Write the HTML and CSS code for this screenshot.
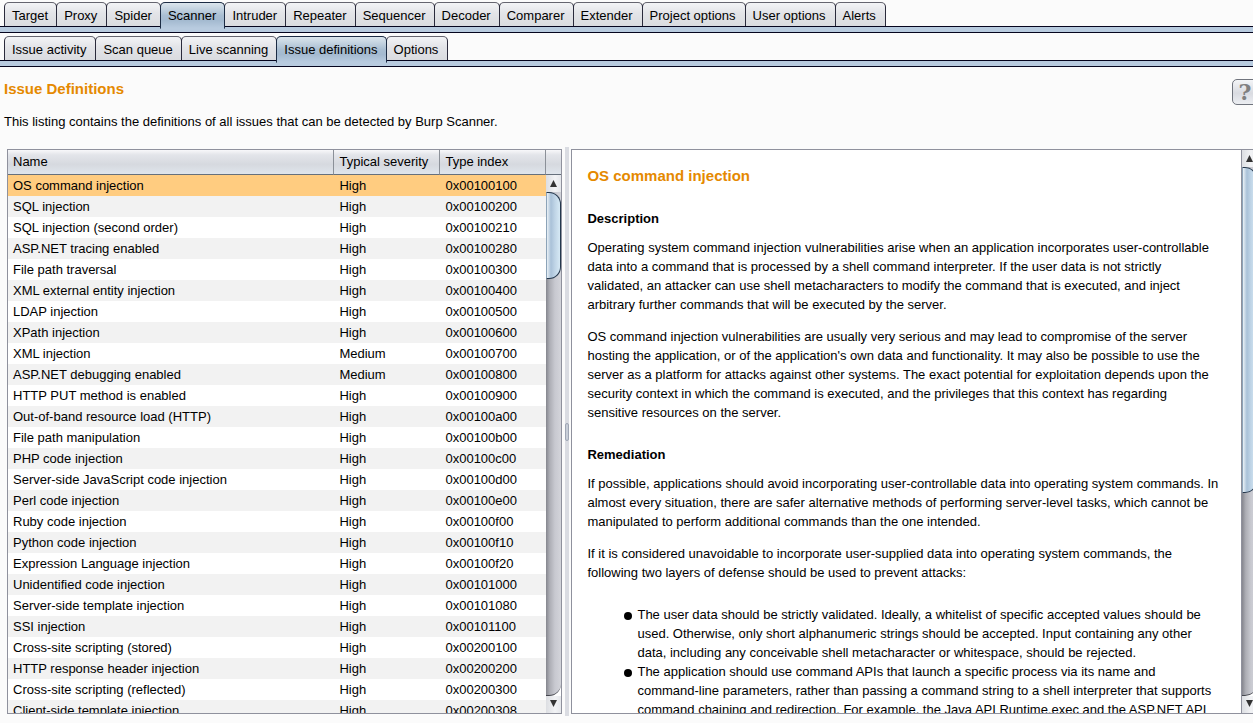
FILE: index.html
```html
<!DOCTYPE html>
<html lang="en">
<head>
<meta charset="utf-8">
<title>Burp Scanner - Issue Definitions</title>
<link rel="stylesheet" href="styles.css">
</head>
<body>
<div class="app">
  <nav class="tabs" aria-label="Tools">
    <button class="tab">Target</button>
    <button class="tab roomy">Proxy</button>
    <button class="tab">Spider</button>
    <button class="tab active">Scanner</button>
    <button class="tab">Intruder</button>
    <button class="tab">Repeater</button>
    <button class="tab">Sequencer</button>
    <button class="tab">Decoder</button>
    <button class="tab">Comparer</button>
    <button class="tab roomy">Extender</button>
    <button class="tab roomy">Project options</button>
    <button class="tab roomy">User options</button>
    <button class="tab roomy">Alerts</button>
  </nav>
  <nav class="tabs" aria-label="Scanner">
    <button class="tab roomy">Issue activity</button>
    <button class="tab">Scan queue</button>
    <button class="tab">Live scanning</button>
    <button class="tab active">Issue definitions</button>
    <button class="tab roomy">Options</button>
  </nav>
  <header class="intro">
    <div class="intro-text">
      <h1 class="title">Issue Definitions</h1>
      <p class="lead">This listing contains the definitions of all issues that can be detected by Burp Scanner.</p>
    </div>
    <button class="help" aria-label="Help">?</button>
  </header>
  <main class="split">
    <section class="list">
      <div class="list-view">
        <table class="issues">
          <colgroup><col><col class="col-severity"><col class="col-index"></colgroup>
          <thead><tr><th>Name</th><th>Typical severity</th><th>Type index</th></tr></thead>
          <tbody>
            <tr class="selected"><td>OS command injection</td><td>High</td><td>0x00100100</td></tr>
            <tr><td>SQL injection</td><td>High</td><td>0x00100200</td></tr>
            <tr><td>SQL injection (second order)</td><td>High</td><td>0x00100210</td></tr>
            <tr><td>ASP.NET tracing enabled</td><td>High</td><td>0x00100280</td></tr>
            <tr><td>File path traversal</td><td>High</td><td>0x00100300</td></tr>
            <tr><td>XML external entity injection</td><td>High</td><td>0x00100400</td></tr>
            <tr><td>LDAP injection</td><td>High</td><td>0x00100500</td></tr>
            <tr><td>XPath injection</td><td>High</td><td>0x00100600</td></tr>
            <tr><td>XML injection</td><td>Medium</td><td>0x00100700</td></tr>
            <tr><td>ASP.NET debugging enabled</td><td>Medium</td><td>0x00100800</td></tr>
            <tr><td>HTTP PUT method is enabled</td><td>High</td><td>0x00100900</td></tr>
            <tr><td>Out-of-band resource load (HTTP)</td><td>High</td><td>0x00100a00</td></tr>
            <tr><td>File path manipulation</td><td>High</td><td>0x00100b00</td></tr>
            <tr><td>PHP code injection</td><td>High</td><td>0x00100c00</td></tr>
            <tr><td>Server-side JavaScript code injection</td><td>High</td><td>0x00100d00</td></tr>
            <tr><td>Perl code injection</td><td>High</td><td>0x00100e00</td></tr>
            <tr><td>Ruby code injection</td><td>High</td><td>0x00100f00</td></tr>
            <tr><td>Python code injection</td><td>High</td><td>0x00100f10</td></tr>
            <tr><td>Expression Language injection</td><td>High</td><td>0x00100f20</td></tr>
            <tr><td>Unidentified code injection</td><td>High</td><td>0x00101000</td></tr>
            <tr><td>Server-side template injection</td><td>High</td><td>0x00101080</td></tr>
            <tr><td>SSI injection</td><td>High</td><td>0x00101100</td></tr>
            <tr><td>Cross-site scripting (stored)</td><td>High</td><td>0x00200100</td></tr>
            <tr><td>HTTP response header injection</td><td>High</td><td>0x00200200</td></tr>
            <tr><td>Cross-site scripting (reflected)</td><td>High</td><td>0x00200300</td></tr>
            <tr><td>Client-side template injection</td><td>High</td><td>0x00200308</td></tr>
          </tbody>
        </table>
      </div>
      <div class="list-side">
        <div class="corner"></div>
        <div class="scrollbar">
          <button class="arrow" aria-label="Scroll up"><svg width="7" height="7" viewBox="0 0 7 7"><path d="M3.5 0L7 7H0z" fill="#333"/></svg></button>
          <div class="track"><div class="thumb thumb-list"></div></div>
          <button class="arrow arrow-down" aria-label="Scroll down"><svg width="7" height="7" viewBox="0 0 7 7"><path d="M0 0H7L3.5 7z" fill="#333"/></svg></button>
        </div>
      </div>
    </section>
    <div class="divider"><span class="grip"></span></div>
    <section class="detail">
      <article class="article">
        <h2 class="title">OS command injection</h2>
        <h3>Description</h3>
        <p>Operating system command injection vulnerabilities arise when an application incorporates user-controllable data into a command that is processed by a shell command interpreter. If the user data is not strictly validated, an attacker can use shell metacharacters to modify the command that is executed, and inject arbitrary further commands that will be executed by the server.</p>
        <p>OS command injection vulnerabilities are usually very serious and may lead to compromise of the server hosting the application, or of the application's own data and functionality. It may also be possible to use the server as a platform for attacks against other systems. The exact potential for exploitation depends upon the security context in which the command is executed, and the privileges that this context has regarding sensitive resources on the server.</p>
        <h3>Remediation</h3>
        <p>If possible, applications should avoid incorporating user-controllable data into operating system commands. In almost every situation, there are safer alternative methods of performing server-level tasks, which cannot be manipulated to perform additional commands than the one intended.</p>
        <p>If it is considered unavoidable to incorporate user-supplied data into operating system commands, the following two layers of defense should be used to prevent attacks:</p>
        <ul>
          <li>The user data should be strictly validated. Ideally, a whitelist of specific accepted values should be used. Otherwise, only short alphanumeric strings should be accepted. Input containing any other data, including any conceivable shell metacharacter or whitespace, should be rejected.</li>
          <li>The application should use command APIs that launch a specific process via its name and command-line parameters, rather than passing a command string to a shell interpreter that supports command chaining and redirection. For example, the Java API Runtime.exec and the ASP.NET API</li>
        </ul>
      </article>
      <div class="scrollbar">
        <button class="arrow" aria-label="Scroll up"><svg width="7" height="7" viewBox="0 0 7 7"><path d="M3.5 0L7 7H0z" fill="#333"/></svg></button>
        <div class="track"><div class="thumb thumb-detail"></div></div>
        <button class="arrow arrow-down" aria-label="Scroll down"><svg width="7" height="7" viewBox="0 0 7 7"><path d="M0 0H7L3.5 7z" fill="#333"/></svg></button>
      </div>
    </section>
  </main>
</div>
</body>
</html>
```
FILE: styles.css
```css
* { box-sizing: border-box; }

body {
  margin: 0;
  overflow: hidden;
  background: #fbfbfb;
  color: #000;
  font: 13px/19px "Liberation Sans", Arial, sans-serif;
}

button { margin: 0; padding: 0; font: inherit; color: inherit; }
h1, h2, h3, p, ul { margin: 0; padding: 0; }

.app {
  display: flex;
  flex-direction: column;
  height: 100vh;
  margin-right: -5px;
}

/* Tab strips */
.tabs {
  display: flex;
  padding: 2px 4px 0;
  position: relative;
  height: 33px;
}
.tabs + .tabs { height: 34px; padding-top: 3px; }
.tabs::after {
  content: "";
  position: absolute;
  inset: auto 0 0 0;
  height: 5px;
  background: #b8cbdf;
  border: solid #05051e;
  border-width: 1px 0;
}
.tab {
  height: 27px;
  margin-right: -1px;
  padding: 0 8px 0 7px;
  border: 1px solid #2b2b3c;
  border-top-color: #65656f;
  border-radius: 5px 5px 0 0;
  background: linear-gradient(#f3f4f6, #e3e4e8 40%, #d8dade);
}
.tab.roomy { padding-right: 9px; }
.tab.active {
  position: relative;
  z-index: 1;
  border-color: #1c2c44;
  border-bottom-color: #b8cbdf;
  background: linear-gradient(#dce6ed, #a9bed2 50%, #a4bad0 70%, #b8cbdf);
}

/* Intro */
.intro { display: flex; justify-content: space-between; padding: 12px 0 18px 4px; }
.title { color: #e58900; font-size: 15px; line-height: 20px; font-weight: bold; }
.lead { margin-top: 13px; }
.help {
  width: 26px;
  height: 26px;
  border: 1px solid #70747d;
  border-radius: 5px;
  background: linear-gradient(#f4f5f7, #d9dbe1 55%, #eceef2);
  color: #808080;
  font: bold 22px/24px "DejaVu Serif", serif;
}

/* Split pane */
.split { flex: 1; min-height: 0; display: flex; margin-bottom: 9px; padding-left: 7px; }
.list {
  display: flex;
  flex: 0 0 44.4%;
  margin-right: 3px;
  border: 1px solid #8f919d;
  background: #fff;
}
.list-view { flex: 1; overflow: hidden; }
.issues { width: 100%; table-layout: fixed; border-collapse: separate; border-spacing: 0; }
.col-severity, .col-index { width: 106px; }
.issues th, .corner {
  height: 25px;
  background: linear-gradient(#f8f8fa, #e3e5ea 20%, #d6d9df 60%, #dfe5ec);
  border-bottom: 1px solid #66707c;
}
.issues th { padding: 0 5px; text-align: left; font-weight: normal; line-height: 22px; border-right: 1px solid #8b9098; }
.issues td { height: 21px; padding: 0 5px; line-height: 21px; white-space: nowrap; }
.issues tbody tr:nth-child(even) { background: #f2f2f2; }
.issues .selected { background: #ffcc80; }
.list-side { display: flex; flex-direction: column; width: 15px; }
.list-side .scrollbar { flex: 1; }

.divider {
  display: flex;
  align-items: center;
  width: 4px;
  margin: -2px 2px -2px 0;
  background: #dadce2;
}
.grip { width: 4px; height: 18px; border: 1px solid #9fa6b4; border-radius: 2px; background: #c8ced8; }

/* Scroll bars */
.scrollbar { display: flex; flex-direction: column; width: 15px; }
.arrow {
  display: flex;
  justify-content: center;
  align-items: center;
  height: 17px;
  border: 0;
  background: linear-gradient(90deg, #dcdee2, #f2f3f5 60%, #e5e7eb);
}
.arrow-down { padding-bottom: 2px; }
.track {
  flex: 1;
  background: linear-gradient(90deg, #85868e, #adaeb5 25%, #c8c9d0 60%, #d3d4da);
  border-bottom: 1px solid #44464e;
  border-bottom-right-radius: 12px;
}
.thumb {
  border: 1px solid #24374c;
  border-left-color: #8ca3b8;
  border-radius: 0 12px 12px 0;
  background: linear-gradient(90deg, #eaf1f6, #a9c1d8 30%, #bfd4e6 60%, #d6e9f5);
}
.thumb-list { height: 87px; }
.thumb-detail { height: 326px; }

/* Issue detail */
.detail {
  display: flex;
  flex: 1;
  min-width: 0;
  border: 1px solid #8f919d;
  background: #fff;
}
.detail .scrollbar { border-left: 1px solid #8f919d; width: 16px; }
.article { flex: 1; overflow: hidden; padding: 16px 22px 0 15px; }
.article h3 { margin: 23px 0 10px; font-size: 13px; line-height: 19px; }
.article p { margin-bottom: 13px; }
.article ul { margin-top: 23px; padding-left: 50px; list-style: none; }
.article li { position: relative; }
.article li::before {
  content: "";
  position: absolute;
  left: -13px;
  top: 7px;
  width: 8px;
  height: 8px;
  border-radius: 50%;
  background: #000;
}
```
